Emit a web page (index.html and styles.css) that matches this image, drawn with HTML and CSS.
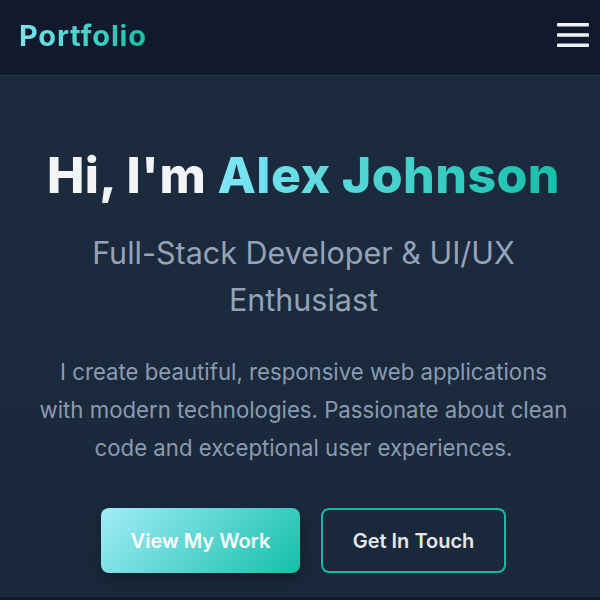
FILE: index.html
```html
<!DOCTYPE html>
<html lang="en">
<head>
<meta charset="utf-8">
<title>Portfolio</title>
<link rel="stylesheet" href="styles.css">
</head>
<body>
<header class="topbar">
  <div class="logo">Portfolio</div>
  <button class="menu" aria-label="Menu">
    <svg width="34" height="28" viewBox="0 0 34 28"><rect x="1" y="2" width="32" height="3.4" rx="1" fill="#eef2f7"/><rect x="1" y="12.3" width="32" height="3.4" rx="1" fill="#eef2f7"/><rect x="1" y="22.6" width="32" height="3.4" rx="1" fill="#eef2f7"/></svg>
  </button>
</header>
<main class="hero">
  <h1 class="title">Hi, I'm <span class="name">Alex Johnson</span></h1>
  <h2 class="subtitle">Full-Stack Developer &amp; UI/UX Enthusiast</h2>
  <p class="intro">I create beautiful, responsive web applications with modern technologies. Passionate about clean code and exceptional user experiences.</p>
  <div class="actions">
    <a class="btn primary" href="#">View My Work</a>
    <a class="btn outline" href="#">Get In Touch</a>
  </div>
</main>
</body>
</html>
```
FILE: styles.css
```css
* { box-sizing: border-box; }
html, body { margin: 0; padding: 0; }
body {
  background: #0f172a;
  font-family: Inter, "Noto Sans", sans-serif;
  height: 600px;
  overflow: hidden;
}
.topbar {
  height: 76px;
  background: #111a2c;
  border-bottom: 1px solid #263445;
  display: flex;
  align-items: center;
  justify-content: space-between;
  padding: 0 10px 0 19px;
}
.logo {
  font-family: Inter, sans-serif;
  font-weight: 700;
  font-size: 29px;
  letter-spacing: 0.8px;
  background: linear-gradient(90deg, #7ce4ee, #14c0a8);
  -webkit-background-clip: text;
  background-clip: text;
  color: transparent;
  margin-top: -4px;
}
.menu {
  background: none;
  border: 0;
  padding: 0;
  display: flex;
  margin-top: -6px;
}
.hero {
  height: 521px;
  background: linear-gradient(180deg, #1c2a3e 0%, #19293b 100%);
  text-align: center;
  padding: 69px 16px 0 23px;
}
.title {
  margin: 0;
  font-family: Inter, sans-serif;
  font-weight: 800;
  font-size: 50px;
  letter-spacing: 0.4px;
  line-height: 60px;
  color: #f3f4f6;
}
.name {
  background: linear-gradient(90deg, #7fe6f7, #14c0a8);
  -webkit-background-clip: text;
  background-clip: text;
  color: transparent;
}
.subtitle {
  margin: 24px auto 0;
  max-width: 470px;
  font-weight: 400;
  font-size: 30.5px;
  line-height: 47px;
  color: #94a3b8;
}
.intro {
  margin: 30px auto 0;
  max-width: 532px;
  font-size: 22.2px;
  line-height: 38px;
  color: #8b9bb0;
}
.actions {
  margin-top: 41px;
  display: flex;
  justify-content: center;
  gap: 21px;
}
.btn {
  height: 65px;
  display: flex;
  align-items: center;
  justify-content: center;
  border-radius: 8px;
  text-decoration: none;
  font-size: 20px;
  font-weight: 600;
}
.primary {
  width: 199px;
  background: linear-gradient(135deg, #a3ecfb 0%, #14c0a8 100%);
  color: #ffffff;
  box-shadow: 0 6px 14px rgba(0,0,0,0.3);
}
.outline {
  width: 185px;
  border: 2px solid #14b8a6;
  color: #e5e7eb;
}
```
